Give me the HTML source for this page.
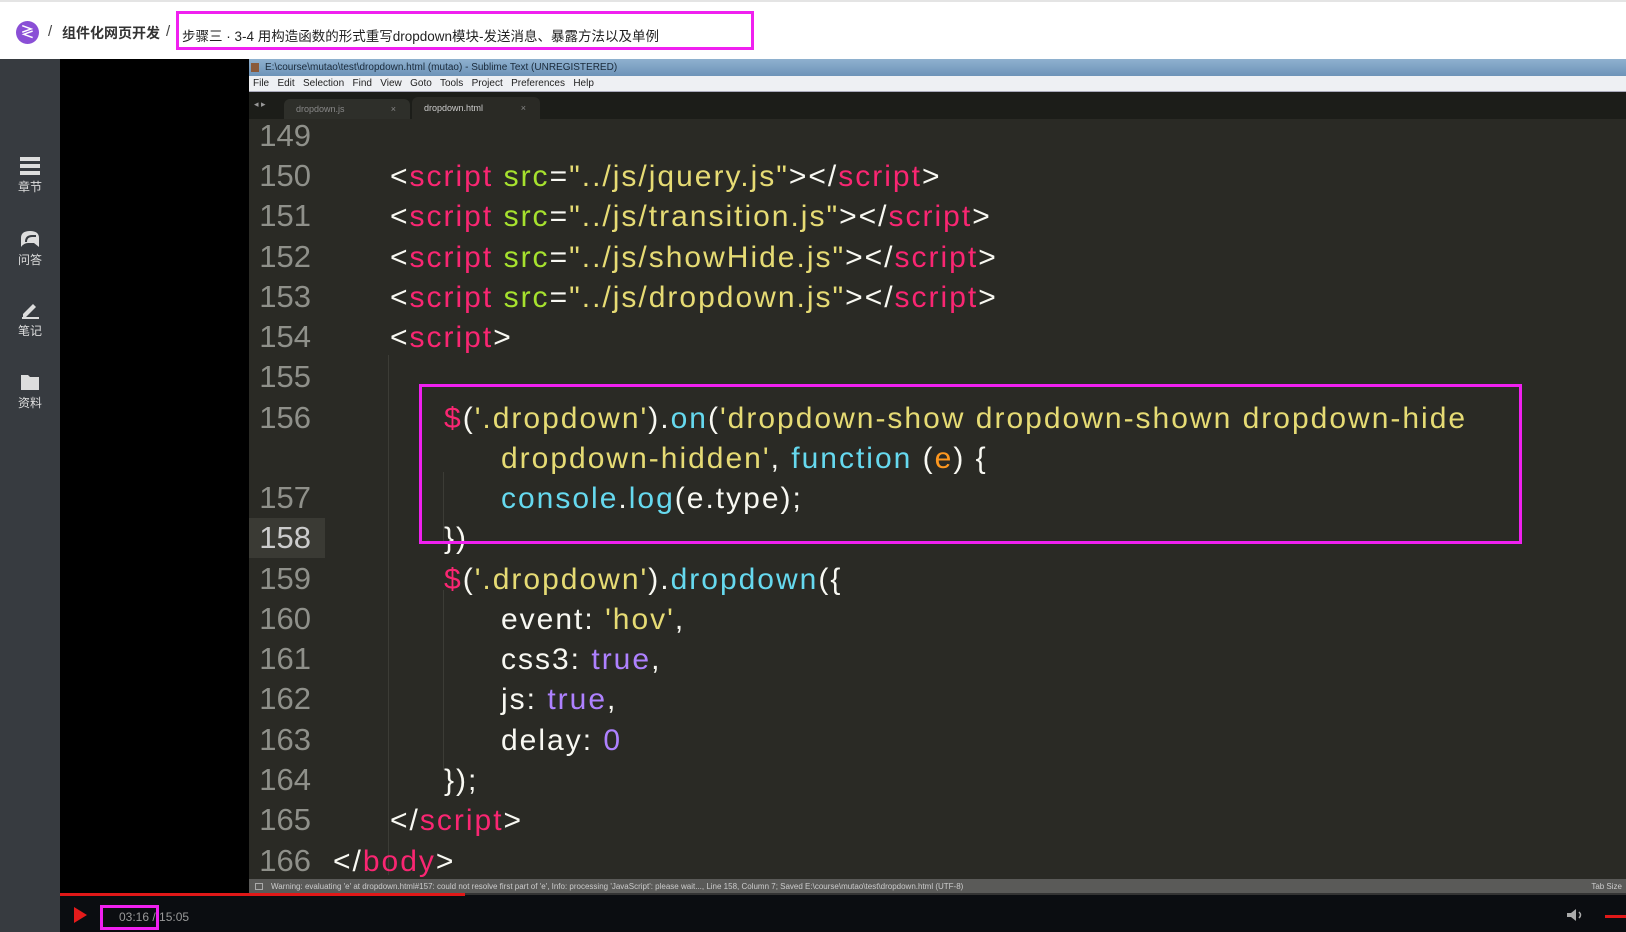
<!DOCTYPE html>
<html><head><meta charset="utf-8"><style>
*{margin:0;padding:0;box-sizing:border-box}
body{width:1626px;height:932px;overflow:hidden;background:#fff;font-family:"Liberation Sans","Noto Sans CJK SC",sans-serif;position:relative}
.a{position:absolute}
#hdr{left:0;top:0;width:1626px;height:59px;background:#fff;border-top:2px solid #e4e4e4}
#side{left:0;top:59px;width:60px;height:873px;background:#373b40}
#black{left:60px;top:59px;width:189px;height:835px;background:#000}
#tb{left:249px;top:59px;width:1377px;height:17px;background:linear-gradient(#8fb1cf,#6d93b8);font-size:10px;color:#1a2a3a;line-height:17px;padding-left:16px}
#mb{left:249px;top:76px;width:1377px;height:16px;background:#eef0f3;font-size:10px;color:#222;line-height:16px;padding-left:4px;border-bottom:1px solid #aab}
#tabs{left:249px;top:92px;width:1377px;height:27px;background:#1c1d19}
#code{left:249px;top:119px;width:1377px;height:760px;background:#2a2a25}
#status{left:249px;top:879px;width:1377px;height:15px;background:#5a5a58;color:#ccc;font-size:8px;line-height:15px;padding-left:22px}
#ctrl{left:60px;top:894px;width:1566px;height:38px;background:#0b0d11}
.ln{position:absolute;left:249px;width:62px;text-align:right;color:#8f908a;font-size:31px;height:40px;line-height:40px}
.cl{position:absolute;white-space:pre;font-size:30px;height:40px;line-height:40px;color:#f8f8f2;letter-spacing:2px}
.t{color:#f92672}.g{color:#a6e22e}.s{color:#e6db74}.b{color:#66d9ef}.p{color:#ae81ff}.o{color:#fd971f}
.si{position:absolute;left:0;width:60px;text-align:center;color:#ddd;font-size:12px}
</style></head><body>
<div id="hdr" class="a"></div>
<div class="a" style="left:16px;top:21px;width:23px;height:23px;border-radius:50%;background:#8a4fd6;color:#fff;font-size:14px;font-weight:bold;text-align:center;line-height:23px">≷</div>
<div class="a" style="left:48px;top:23px;font-size:15px;color:#444">/</div>
<div class="a" style="left:62px;top:23px;font-size:14px;color:#333;font-weight:bold">组件化网页开发</div>
<div class="a" style="left:166px;top:23px;font-size:15px;color:#444">/</div>
<div class="a" style="left:176px;top:11px;width:578px;height:39px;border:3px solid #f020f0"></div>
<div class="a" style="left:182px;top:25px;font-size:13.5px;color:#222">步骤三 · 3-4 用构造函数的形式重写dropdown模块-发送消息、暴露方法以及单例</div>

<div id="side" class="a"></div>
<div class="si" style="top:157px"><svg width="20" height="18"><rect x="0" y="0" width="20" height="4" fill="#ddd"/><rect x="0" y="7" width="20" height="4" fill="#ddd"/><rect x="0" y="14" width="20" height="4" fill="#ddd"/></svg><div>章节</div></div>
<div class="si" style="top:230px"><svg width="20" height="18"><path d="M1 17V8Q1 1 10 1Q19 1 19 8V17L14 13H8Q4 13 1 17Z" fill="#ddd"/><path d="M6 12Q6 6 12 6H16" stroke="#373b40" stroke-width="2" fill="none"/></svg><div>问答</div></div>
<div class="si" style="top:301px"><svg width="20" height="18"><path d="M3 13L13 3L16 6L6 16H3Z" fill="#ddd"/><rect x="2" y="16" width="17" height="2" fill="#ddd"/></svg><div>笔记</div></div>
<div class="si" style="top:373px"><svg width="20" height="18"><path d="M1 2H8L10 4H19V17H1Z" fill="#ddd"/></svg><div>资料</div></div>

<div id="black" class="a"></div>
<div id="tb" class="a">E:\course\mutao\test\dropdown.html (mutao) - Sublime Text (UNREGISTERED)</div>
<div class="a" style="left:251px;top:63px;width:8px;height:9px;background:#8a5a3a"></div>
<div id="mb" class="a">File&nbsp;&nbsp; Edit&nbsp;&nbsp; Selection&nbsp;&nbsp; Find&nbsp;&nbsp; View&nbsp;&nbsp; Goto&nbsp;&nbsp; Tools&nbsp;&nbsp; Project&nbsp;&nbsp; Preferences&nbsp;&nbsp; Help</div>
<div id="tabs" class="a"></div>
<div class="a" style="left:254px;top:99px;font-size:9px;color:#999">◂ ▸</div>
<div class="a" style="left:284px;top:99px;width:126px;height:20px;background:#2e2f2a;border-radius:6px 6px 0 0;font-size:9px;color:#888;line-height:20px;padding-left:12px">dropdown.js<span style="position:absolute;right:14px">×</span></div>
<div class="a" style="left:412px;top:97px;width:128px;height:22px;background:#2a2a25;border-radius:6px 6px 0 0;font-size:9px;color:#ccc;line-height:22px;padding-left:12px">dropdown.html<span style="position:absolute;right:14px;color:#888">×</span></div>
<div id="code" class="a"></div>
<div class="a" style="left:249px;top:518px;width:76px;height:40px;background:#3a3a34"></div>
<div class="a" style="left:388px;top:355px;width:1px;height:520px;background:#3c3c36"></div>
<div class="a" style="left:443px;top:590px;width:1px;height:180px;background:#3c3c36"></div>
<div class="a" style="left:443px;top:472px;width:1px;height:70px;background:#3c3c36"></div>

<div class="ln" style="top:116px">149</div>
<div class="ln" style="top:156px">150</div>
<div class="ln" style="top:196px">151</div>
<div class="ln" style="top:237px">152</div>
<div class="ln" style="top:277px">153</div>
<div class="ln" style="top:317px">154</div>
<div class="ln" style="top:357px">155</div>
<div class="ln" style="top:398px">156</div>
<div class="ln" style="top:478px">157</div>
<div class="ln" style="top:518px;color:#ccc">158</div>
<div class="ln" style="top:559px">159</div>
<div class="ln" style="top:599px">160</div>
<div class="ln" style="top:639px">161</div>
<div class="ln" style="top:679px">162</div>
<div class="ln" style="top:720px">163</div>
<div class="ln" style="top:760px">164</div>
<div class="ln" style="top:800px">165</div>
<div class="ln" style="top:841px">166</div>

<div class="cl" style="left:390px;top:157px">&lt;<span class="t">script</span> <span class="g">src</span>=<span class="s">"../js/jquery.js"</span>&gt;&lt;/<span class="t">script</span>&gt;</div>
<div class="cl" style="left:390px;top:197px">&lt;<span class="t">script</span> <span class="g">src</span>=<span class="s">"../js/transition.js"</span>&gt;&lt;/<span class="t">script</span>&gt;</div>
<div class="cl" style="left:390px;top:238px">&lt;<span class="t">script</span> <span class="g">src</span>=<span class="s">"../js/showHide.js"</span>&gt;&lt;/<span class="t">script</span>&gt;</div>
<div class="cl" style="left:390px;top:278px">&lt;<span class="t">script</span> <span class="g">src</span>=<span class="s">"../js/dropdown.js"</span>&gt;&lt;/<span class="t">script</span>&gt;</div>
<div class="cl" style="left:390px;top:318px">&lt;<span class="t">script</span>&gt;</div>
<div class="cl" style="left:444px;top:399px"><span class="t">$</span>(<span class="s">'.dropdown'</span>).<span class="b">on</span>(<span class="s">'dropdown-show dropdown-shown dropdown-hide</span></div>
<div class="cl" style="left:501px;top:439px"><span class="s">dropdown-hidden'</span>, <span class="b">function</span> (<span class="o">e</span>) {</div>
<div class="cl" style="left:501px;top:479px"><span class="b">console</span>.<span class="b">log</span>(e.type);</div>
<div class="cl" style="left:444px;top:519px">})</div>
<div class="cl" style="left:444px;top:560px"><span class="t">$</span>(<span class="s">'.dropdown'</span>).<span class="b">dropdown</span>({</div>
<div class="cl" style="left:501px;top:600px">event: <span class="s">'hov'</span>,</div>
<div class="cl" style="left:501px;top:640px">css3: <span class="p">true</span>,</div>
<div class="cl" style="left:501px;top:680px">js: <span class="p">true</span>,</div>
<div class="cl" style="left:501px;top:721px">delay: <span class="p">0</span></div>
<div class="cl" style="left:444px;top:761px">});</div>
<div class="cl" style="left:390px;top:801px">&lt;/<span class="t">script</span>&gt;</div>
<div class="cl" style="left:333px;top:842px">&lt;/<span class="t">body</span>&gt;</div>

<div class="a" style="left:419px;top:384px;width:1103px;height:160px;border:3px solid #f020f0"></div>

<div id="status" class="a">Warning: evaluating 'e' at dropdown.html#157: could not resolve first part of 'e', Info: processing 'JavaScript': please wait..., Line 158, Column 7; Saved E:\course\mutao\test\dropdown.html (UTF-8)<span style="position:absolute;right:4px">Tab Size</span></div>
<div class="a" style="left:255px;top:883px;width:8px;height:7px;border:1px solid #aaa"></div>
<div id="ctrl" class="a"></div>
<div class="a" style="left:60px;top:893px;width:1566px;height:2px;background:#333"></div>
<div class="a" style="left:60px;top:893px;width:405px;height:3px;background:#e01818"></div>
<div class="a" style="left:74px;top:907px;width:0;height:0;border-left:13px solid #e51b1b;border-top:8px solid transparent;border-bottom:8px solid transparent"></div>
<div class="a" style="left:100px;top:905px;width:59px;height:25px;border:3px solid #f020f0"></div>
<div class="a" style="left:119px;top:910px;font-size:12px;color:#999">03:16 / 15:05</div>
<svg class="a" style="left:1566px;top:908px" width="18" height="14"><path d="M1 5H5L10 1V13L5 9H1Z" fill="#aaa"/><path d="M13 4Q16 7 13 10" stroke="#aaa" stroke-width="1.5" fill="none"/></svg>
<div class="a" style="left:1605px;top:915px;width:21px;height:3px;background:#e01818"></div>
</body></html>
